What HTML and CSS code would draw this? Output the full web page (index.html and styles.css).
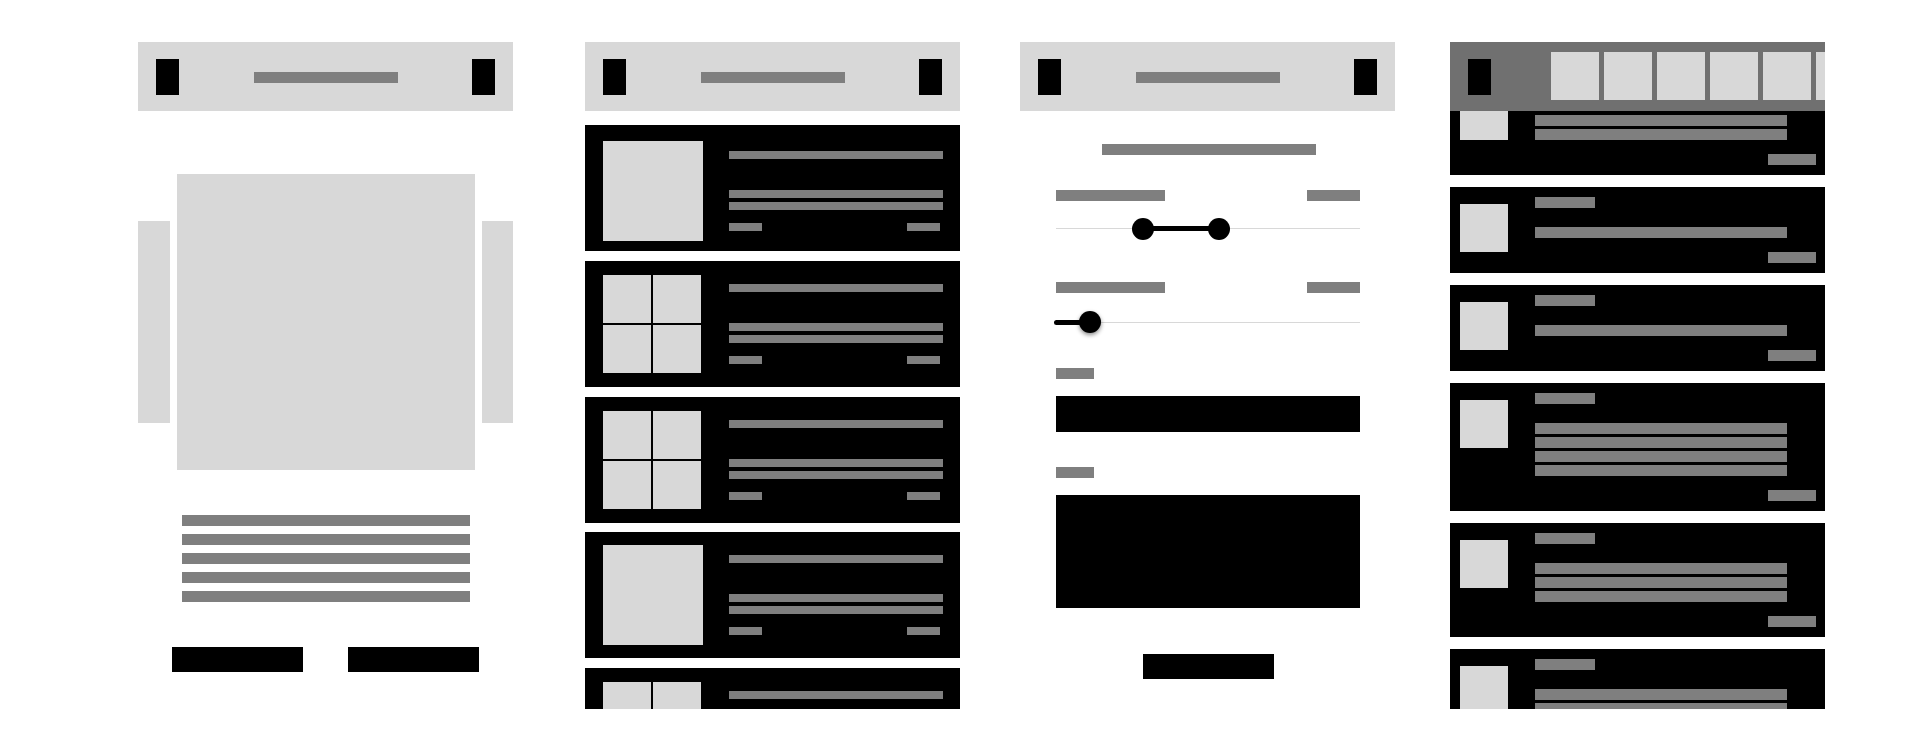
FILE: index.html
```html
<!DOCTYPE html>
<html lang="en">
<head>
<meta charset="utf-8">
<title>Wireframes</title>
<link rel="stylesheet" href="styles.css">
</head>
<body>
<div class="canvas">

  <!-- Screen 1: detail / carousel -->
  <section class="screen s1">
    <header class="nav">
      <span class="nav-icon"></span>
      <span class="nav-title"></span>
      <span class="nav-icon"></span>
    </header>
    <div class="carousel">
      <div class="side side-l"></div>
      <div class="hero"></div>
      <div class="side side-r"></div>
    </div>
    <div class="para">
      <span class="pline"></span>
      <span class="pline"></span>
      <span class="pline"></span>
      <span class="pline"></span>
      <span class="pline"></span>
    </div>
    <div class="btn-row">
      <span class="btn"></span>
      <span class="btn"></span>
    </div>
  </section>

  <!-- Screen 2: feed list -->
  <section class="screen s2">
    <header class="nav">
      <span class="nav-icon"></span>
      <span class="nav-title"></span>
      <span class="nav-icon"></span>
    </header>
    <div class="feed">
      <article class="fcard fcard-first">
        <div class="fthumb"><div class="fimg"></div></div>
        <div class="ftext">
          <span class="fl"></span>
          <span class="fl fl-b"></span>
          <span class="fl fl-c"></span>
          <div class="fmeta"><span class="fs"></span><span class="fs"></span></div>
        </div>
      </article>
      <article class="fcard">
        <div class="fthumb"><div class="fgrid"><i></i><i></i><i></i><i></i></div></div>
        <div class="ftext">
          <span class="fl"></span>
          <span class="fl fl-b"></span>
          <span class="fl fl-c"></span>
          <div class="fmeta"><span class="fs"></span><span class="fs"></span></div>
        </div>
      </article>
      <article class="fcard">
        <div class="fthumb"><div class="fgrid"><i></i><i></i><i></i><i></i></div></div>
        <div class="ftext">
          <span class="fl"></span>
          <span class="fl fl-b"></span>
          <span class="fl fl-c"></span>
          <div class="fmeta"><span class="fs"></span><span class="fs"></span></div>
        </div>
      </article>
      <article class="fcard">
        <div class="fthumb"><div class="fimg"></div></div>
        <div class="ftext">
          <span class="fl"></span>
          <span class="fl fl-b"></span>
          <span class="fl fl-c"></span>
          <div class="fmeta"><span class="fs"></span><span class="fs"></span></div>
        </div>
      </article>
      <article class="fcard">
        <div class="fthumb"><div class="fgrid"><i></i><i></i><i></i><i></i></div></div>
        <div class="ftext">
          <span class="fl"></span>
          <span class="fl fl-b"></span>
          <span class="fl fl-c"></span>
          <div class="fmeta"><span class="fs"></span><span class="fs"></span></div>
        </div>
      </article>
    </div>
  </section>

  <!-- Screen 3: form -->
  <section class="screen s3">
    <header class="nav">
      <span class="nav-icon"></span>
      <span class="nav-title"></span>
      <span class="nav-icon"></span>
    </header>
    <div class="form">
      <span class="form-title"></span>
      <div class="lrow"><span class="lab-l"></span><span class="lab-r"></span></div>
      <div class="slider">
        <span class="track"></span>
        <span class="active range" style="left:87px;width:76px"></span>
        <span class="knob" style="left:76px"></span>
        <span class="knob" style="left:152px"></span>
      </div>
      <div class="lrow lrow2"><span class="lab-l"></span><span class="lab-r"></span></div>
      <div class="slider slider-b">
        <span class="track"></span>
        <span class="active single" style="left:-2px;width:38px"></span>
        <span class="knob shadow" style="left:23px"></span>
      </div>
      <span class="lab-s"></span>
      <div class="input"></div>
      <span class="lab-s lab-s2"></span>
      <div class="textarea"></div>
      <span class="submit"></span>
    </div>
  </section>

  <!-- Screen 4: list with thumbnail strip -->
  <section class="screen s4">
    <header class="nav-dark">
      <span class="nav-icon"></span>
      <div class="strip">
        <i></i><i></i><i></i><i></i><i></i><i></i>
      </div>
    </header>
    <div class="list">
      <article class="lcard">
        <div class="limg"></div>
        <div class="lbody">
          <span class="ltitle"></span>
          <div class="llines"><span></span><span></span></div>
          <div class="lfoot"><span></span></div>
        </div>
      </article>
      <article class="lcard">
        <div class="limg"></div>
        <div class="lbody">
          <span class="ltitle"></span>
          <div class="llines"><span></span></div>
          <div class="lfoot"><span></span></div>
        </div>
      </article>
      <article class="lcard">
        <div class="limg"></div>
        <div class="lbody">
          <span class="ltitle"></span>
          <div class="llines"><span></span></div>
          <div class="lfoot"><span></span></div>
        </div>
      </article>
      <article class="lcard">
        <div class="limg"></div>
        <div class="lbody">
          <span class="ltitle"></span>
          <div class="llines"><span></span><span></span><span></span><span></span></div>
          <div class="lfoot"><span></span></div>
        </div>
      </article>
      <article class="lcard">
        <div class="limg"></div>
        <div class="lbody">
          <span class="ltitle"></span>
          <div class="llines"><span></span><span></span><span></span></div>
          <div class="lfoot"><span></span></div>
        </div>
      </article>
      <article class="lcard">
        <div class="limg"></div>
        <div class="lbody">
          <span class="ltitle"></span>
          <div class="llines"><span></span><span></span><span></span></div>
          <div class="lfoot"><span></span></div>
        </div>
      </article>
    </div>
  </section>

</div>
</body>
</html>
```

FILE: styles.css
```css
* { box-sizing: border-box; }

html, body {
  margin: 0;
  padding: 0;
  background: #ffffff;
  font-family: "Liberation Sans", Arial, sans-serif;
}

.canvas {
  display: flex;
  align-items: flex-start;
  padding: 42px 0 0 138px;
  width: 1920px;
  height: 750px;
  overflow: hidden;
}

.screen {
  position: relative;
  flex: 0 0 375px;
  width: 375px;
  height: 667px;
  overflow: hidden;
  background: #ffffff;
}
.s2 { margin-left: 72px; }
.s3 { margin-left: 60px; }
.s4 { margin-left: 55px; }

/* nav bar */
.nav {
  height: 69px;
  background: #d8d8d8;
  display: flex;
  align-items: center;
  justify-content: space-between;
  padding: 0 18px;
}
.nav-icon {
  display: block;
  width: 23px;
  height: 36px;
  background: #000;
  flex-shrink: 0;
}
.nav-title {
  display: block;
  width: 144px;
  height: 11px;
  background: #7f7f7f;
  margin-top: 2px;
}

/* screen 1 */
.carousel {
  display: flex;
  align-items: center;
  gap: 7px;
  margin-top: 63px;
}
.side { height: 202px; background: #d8d8d8; }
.side-l { width: 32px; }
.side-r { width: 31px; }
.hero { width: 298px; height: 296px; background: #d8d8d8; }

.para {
  display: flex;
  flex-direction: column;
  gap: 8px;
  margin: 45px 0 0 44px;
}
.pline {
  display: block;
  width: 288px;
  height: 11px;
  background: #7f7f7f;
}
.btn-row {
  display: flex;
  justify-content: center;
  gap: 45px;
  margin-top: 45px;
}
.btn {
  display: block;
  width: 131px;
  height: 25px;
  background: #000;
}

/* screen 2 */
.feed {
  display: flex;
  flex-direction: column;
  gap: 9.75px;
  padding-top: 14px;
}
.fcard {
  flex-shrink: 0;
  height: 126px;
  background: #000;
  display: flex;
  align-items: center;
  padding: 0 17px 0 18px;
}
.fcard-first { padding-top: 6px; }
.fthumb {
  width: 100px;
  flex-shrink: 0;
}
.fimg {
  width: 100px;
  height: 100px;
  background: #d8d8d8;
}
.fgrid {
  width: 98px;
  height: 98px;
  display: grid;
  grid-template-columns: 48px 48px;
  grid-template-rows: 48px 48px;
  gap: 2px;
}
.fgrid i { display: block; background: #d8d8d8; }
.ftext {
  margin-left: 26px;
  width: 214px;
  display: flex;
  flex-direction: column;
}
.fl {
  display: block;
  height: 8px;
  background: #7f7f7f;
}
.fl-b { margin-top: 31px; }
.fl-c { margin-top: 4px; }
.fmeta {
  display: flex;
  justify-content: space-between;
  margin-top: 13px;
  padding-right: 3px;
}
.fs {
  display: block;
  width: 33px;
  height: 8px;
  background: #7f7f7f;
}

/* screen 3 */
.form {
  display: flex;
  flex-direction: column;
  padding: 0 35px 0 36px;
}
.form-title {
  display: block;
  align-self: center;
  width: 214px;
  height: 11px;
  background: #7f7f7f;
  margin-top: 33px;
  margin-left: 1px;
}
.lrow {
  display: flex;
  justify-content: space-between;
  margin-top: 35px;
}
.lrow2 { margin-top: 42px; }
.lab-l { display: block; width: 109px; height: 11px; background: #7f7f7f; }
.lab-r { display: block; width: 53px; height: 11px; background: #7f7f7f; }

.slider {
  position: relative;
  height: 22px;
  margin-top: 17px;
}
.slider-b { margin-top: 18px; }
.track {
  position: absolute;
  left: 0;
  right: 0;
  top: 10px;
  height: 1px;
  background: #d8d8d8;
}
.slider-b .track { top: 11px; }
.active {
  position: absolute;
  top: 8px;
  height: 5px;
  background: #000;
}
.slider-b .active { top: 9px; }
.active.single { border-radius: 3px; }
.knob {
  position: absolute;
  top: 0;
  width: 22px;
  height: 22px;
  border-radius: 50%;
  background: #000;
}
.knob.shadow { box-shadow: 0 2px 4px rgba(0, 0, 0, 0.45); }

.lab-s {
  display: block;
  width: 38px;
  height: 11px;
  background: #7f7f7f;
  margin-top: 35px;
}
.input {
  height: 36px;
  background: #000;
  margin-top: 17px;
}
.textarea {
  height: 113px;
  background: #000;
  margin-top: 17px;
}
.submit {
  display: block;
  align-self: center;
  width: 131px;
  height: 25px;
  background: #000;
  margin-top: 46px;
}

/* screen 4 */
.nav-dark {
  position: absolute;
  top: 0;
  left: 0;
  width: 375px;
  height: 69px;
  background: #707070;
  display: flex;
  align-items: center;
  padding-left: 18px;
  overflow: hidden;
  z-index: 2;
}
.strip {
  display: flex;
  gap: 5px;
  margin-left: 60px;
  margin-top: -2px;
}
.strip i {
  display: block;
  flex: 0 0 48px;
  width: 48px;
  height: 48px;
  background: #d8d8d8;
}
.list {
  display: flex;
  flex-direction: column;
  gap: 12px;
  padding-top: 33px;
}
.lcard {
  flex-shrink: 0;
  display: flex;
  align-items: flex-start;
  background: #000;
  padding: 10px 9px 10px 10px;
}
.limg {
  flex: 0 0 48px;
  height: 48px;
  background: #d8d8d8;
  margin-top: 7px;
}
.lbody {
  flex: 1;
  margin-left: 27px;
  display: flex;
  flex-direction: column;
}
.ltitle {
  display: block;
  width: 60px;
  height: 11px;
  background: #7f7f7f;
}
.llines {
  display: flex;
  flex-direction: column;
  gap: 3px;
  margin-top: 19px;
}
.llines span {
  display: block;
  width: 252px;
  height: 11px;
  background: #7f7f7f;
}
.lfoot {
  display: flex;
  justify-content: flex-end;
  margin-top: 14px;
}
.lfoot span {
  display: block;
  width: 48px;
  height: 11px;
  background: #7f7f7f;
}
```
